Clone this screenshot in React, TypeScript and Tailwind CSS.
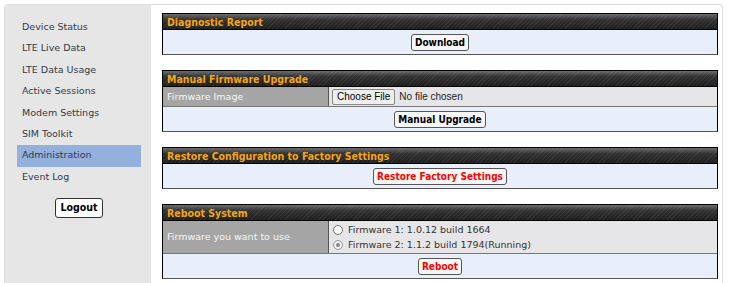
import React from "react";

const menu = [
  "Device Status",
  "LTE Live Data",
  "LTE Data Usage",
  "Active Sessions",
  "Modem Settings",
  "SIM Toolkit",
  "Administration",
  "Event Log",
];

function Header({ title }: { title: string }) {
  return (
    <div className="h-[17px] border border-black bg-[repeating-linear-gradient(135deg,rgba(255,255,255,0.06)_0_1px,transparent_1px_3px),linear-gradient(#6b6b6b,#333_35%,#1e1e1e)] pl-[4px] font-['DejaVu_Sans_Condensed','DejaVu_Sans',sans-serif] text-[10.5px] font-bold leading-[16px] text-[#f5a514]">
      {title}
    </div>
  );
}

function Btn({ children, red }: { children: React.ReactNode; red?: boolean }) {
  return (
    <button
      className={`h-[17px] rounded-[3px] border border-[#555] bg-[#f7f7f7] px-[3px] font-['DejaVu_Sans_Condensed','DejaVu_Sans',sans-serif] text-[10px] font-bold leading-[15px] ${red ? "text-[#f00]" : "text-black"}`}
    >
      {children}
    </button>
  );
}

function Section({ title, children }: { title: string; children: React.ReactNode }) {
  return (
    <div className="mb-[15px]">
      <Header title={title} />
      <div className="border-x border-b border-x-black border-b-[#555]">{children}</div>
    </div>
  );
}

function BodyRow({ children }: { children: React.ReactNode }) {
  return <div className="flex h-[24px] items-center justify-center bg-[#e8eefa]">{children}</div>;
}

export default function App() {
  return (
    <div className="h-[283px] w-[731px] bg-white pl-[4px] pr-[8px] pt-[4px] font-['DejaVu_Sans',sans-serif] text-[9.5px]">
      <div className="flex h-[279px] rounded-t-[4px] border-x border-t border-[#dcdcdc]">
        <div className="w-[146px] rounded-tl-[4px] bg-[#e6e6e6] pl-[12px] pr-[10px] pt-[12px]">
          {menu.map((m) => (
            <div
              key={m}
              className={`h-[21.4px] pl-[5px] leading-[20px] text-[#343a48] ${m === "Administration" ? "bg-[#93b1dc]" : ""}`}
            >
              {m}
            </div>
          ))}
          <div className="mt-[10px] flex justify-center">
            <button className="h-[20px] rounded-[3px] border border-[#333] bg-white px-[4px] font-['DejaVu_Sans_Condensed','DejaVu_Sans',sans-serif] text-[10.5px] font-bold text-black">
              Logout
            </button>
          </div>
        </div>
        <div className="flex-1 pl-[11px] pr-[4px] pt-[8px]">
          <Section title="Diagnostic Report">
            <BodyRow>
              <Btn>Download</Btn>
            </BodyRow>
          </Section>
          <Section title="Manual Firmware Upgrade">
            <div className="flex h-[20px] border-b border-[#777]">
              <div className="w-[166px] border-r border-[#555] bg-[#a5a5a5] pl-[4px] leading-[19px] text-[#f6f6f6]">
                Firmware Image
              </div>
              <div className="flex flex-1 items-center gap-[4px] bg-[#e6e6e9] pl-[3px]">
                <span className="h-[16px] rounded-[2px] border border-[#888] bg-[#efefef] px-[4px] font-['Liberation_Sans',sans-serif] text-[10px] leading-[14px] text-black">
                  Choose File
                </span>
                <span className="font-['Liberation_Sans',sans-serif] text-[10px] text-[#222]">No file chosen</span>
              </div>
            </div>
            <BodyRow>
              <Btn>Manual Upgrade</Btn>
            </BodyRow>
          </Section>
          <Section title="Restore Configuration to Factory Settings">
            <BodyRow>
              <Btn red>Restore Factory Settings</Btn>
            </BodyRow>
          </Section>
          <Section title="Reboot System">
            <div className="flex h-[33px] border-b border-[#777]">
              <div className="flex w-[166px] items-center border-r border-[#555] bg-[#a5a5a5] pl-[4px] text-[#f6f6f6]">
                Firmware you want to use
              </div>
              <div className="flex flex-1 flex-col justify-center gap-[1px] bg-[#e6e6e9] pl-[4px] text-[#333]">
                <label className="flex items-center gap-[5px] leading-[14px]">
                  <span className="h-[10px] w-[10px] rounded-full border border-[#777] bg-white" />
                  Firmware 1: 1.0.12 build 1664
                </label>
                <label className="flex items-center gap-[5px] leading-[14px]">
                  <span className="flex h-[10px] w-[10px] items-center justify-center rounded-full border border-[#999] bg-[#f2f2f2]">
                    <span className="h-[4px] w-[4px] rounded-full bg-[#888]" />
                  </span>
                  Firmware 2: 1.1.2 build 1794(Running)
                </label>
              </div>
            </div>
            <BodyRow>
              <Btn red>Reboot</Btn>
            </BodyRow>
          </Section>
        </div>
      </div>
    </div>
  );
}
